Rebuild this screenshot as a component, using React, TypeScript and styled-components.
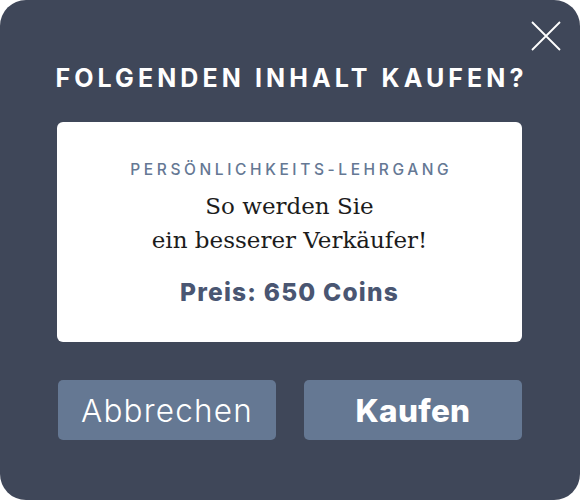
import React from "react";
import styled, { createGlobalStyle } from "styled-components";

const Global = createGlobalStyle`
  html, body { margin: 0; padding: 0; background: #ffffff; }
  body { font-family: "Inter", "Liberation Sans", sans-serif; }
`;

const Dialog = styled.div`
  position: relative;
  box-sizing: border-box;
  width: 580px;
  height: 500px;
  background: #3f4759;
  border-radius: 26px;
  padding: 62px 58px 0 57px;
  display: flex;
  flex-direction: column;
  align-items: stretch;
`;

const Close = styled.button`
  position: absolute;
  top: 20px;
  right: 18px;
  width: 32px;
  height: 32px;
  padding: 0;
  border: 0;
  background: transparent;
  cursor: pointer;
  display: flex;
  align-items: center;
  justify-content: center;
`;

const Title = styled.h1`
  margin: 0 -40px;
  text-align: center;
  color: #ffffff;
  font-family: "Inter", "Liberation Sans", sans-serif;
  font-weight: 700;
  font-size: 25px;
  line-height: 32px;
  letter-spacing: 4.1px;
  text-indent: 4px;
`;

const Card = styled.div`
  margin-top: 28px;
  height: 220px;
  box-sizing: border-box;
  background: #ffffff;
  border-radius: 6px;
  display: flex;
  flex-direction: column;
  align-items: center;
  padding-top: 39px;
`;

const Kicker = styled.div`
  color: #657894;
  font-family: "Inter", "Liberation Sans", sans-serif;
  font-weight: 500;
  font-size: 15.5px;
  line-height: 18px;
  letter-spacing: 3.6px;
  text-indent: 3.6px;
`;

const Headline = styled.div`
  margin-top: 10px;
  color: #1c1c1c;
  font-family: "DejaVu Serif", "Liberation Serif", serif;
  font-size: 23px;
  line-height: 34px;
  text-align: center;
`;

const Price = styled.div`
  margin-top: 20px;
  color: #4a5672;
  font-family: "Inter", "Liberation Sans", sans-serif;
  font-weight: 800;
  font-size: 24.5px;
  line-height: 30px;
  letter-spacing: 1.2px;
`;

const Actions = styled.div`
  margin-top: 38px;
  display: grid;
  grid-template-columns: 218px 218px;
  justify-content: space-between;
  padding-left: 1px;
`;

const Button = styled.button<{ $primary?: boolean }>`
  height: 60px;
  border: 0;
  border-radius: 5px;
  background: #657893;
  color: #ffffff;
  font-family: "Inter", "Liberation Sans", sans-serif;
  font-size: 31.5px;
  font-weight: ${(p) => (p.$primary ? 800 : 300)};
  letter-spacing: ${(p) => (p.$primary ? "0.3px" : "1.2px")};
  cursor: pointer;
  padding: 0;
`;

export default function App() {
  return (
    <>
      <Global />
      <Dialog>
        <Close aria-label="Schließen">
          <svg width="30" height="30" viewBox="0 0 30 30">
            <path d="M1 1 L29 29 M29 1 L1 29" stroke="#ffffff" strokeWidth="1.8" fill="none" />
          </svg>
        </Close>
        <Title>FOLGENDEN INHALT KAUFEN?</Title>
        <Card>
          <Kicker>PERSÖNLICHKEITS-LEHRGANG</Kicker>
          <Headline>
            So werden Sie
            <br />
            ein besserer Verkäufer!
          </Headline>
          <Price>Preis: 650 Coins</Price>
        </Card>
        <Actions>
          <Button>Abbrechen</Button>
          <Button $primary>Kaufen</Button>
        </Actions>
      </Dialog>
    </>
  );
}
